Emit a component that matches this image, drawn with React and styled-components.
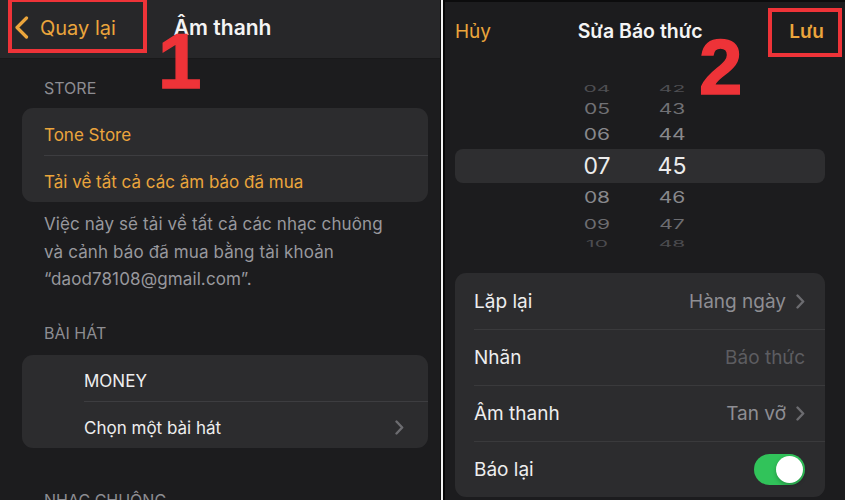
import React from 'react';
import styled, { createGlobalStyle } from 'styled-components';

const Global = createGlobalStyle`
  html, body { margin: 0; padding: 0; background: #1c1c1e; }
  body {
    font-family: Inter, "Noto Sans", "Liberation Sans", sans-serif;
    -webkit-font-smoothing: antialiased;
  }
`;

const ORANGE = '#eba53c';
const RED = '#ee3338';

const Screen = styled.div`
  position: relative;
  width: 845px;
  height: 500px;
  overflow: hidden;
  display: flex;
  background: #1c1c1e;
`;

const LeftPanel = styled.section`
  width: 440px;
  flex: none;
  display: flex;
  flex-direction: column;
  background: #1c1c1e;
`;

const Seam = styled.div`
  width: 2px;
  flex: none;
  background: #f2f2f2;
  border-left: 1px solid #111;
  border-right: 2px solid #050505;
`;

const RightPanel = styled.section`
  flex: 1;
  display: flex;
  flex-direction: column;
  background: #1c1c1e;
  border-top: 2px solid #0c0c0d;
`;

/* ---------- navigation bars ---------- */

const NavBar = styled.header`
  height: 59px;
  flex: none;
  display: flex;
  align-items: center;
  background: #272729;
  border-bottom: 1px solid #19191a;
  padding: 0 0 3px 14px;
  box-sizing: border-box;
  gap: 58px;
`;

const BackButton = styled.div`
  display: flex;
  align-items: center;
  gap: 11px;
  color: ${ORANGE};
  font-size: 20px;
`;

const NavTitle = styled.div`
  color: #f4f4f4;
  font-size: 21px;
  font-weight: 600;
`;

const ModalBar = styled.header`
  height: 58px;
  flex: none;
  display: flex;
  align-items: center;
  justify-content: space-between;
  padding: 0 21px 0 10px;
`;

const BarAction = styled.div`
  color: ${ORANGE};
  font-size: 19px;
  font-weight: ${p => (p.$strong ? 600 : 400)};
`;

const BarTitle = styled.div`
  color: #f4f4f4;
  font-size: 19.5px;
  font-weight: 600;
`;

/* ---------- grouped list (left) ---------- */

const ListBody = styled.div`
  display: flex;
  flex-direction: column;
  padding: 0 12px 0 22px;
`;

const SectionLabel = styled.div`
  color: #8d8d92;
  font-size: 16px;
  line-height: 20px;
  padding-left: 22px;
  margin-top: ${p => p.$top}px;
  margin-bottom: ${p => p.$bottom}px;
  text-transform: uppercase;
`;

const Card = styled.div`
  background: #2c2c2e;
  border-radius: 11px;
  display: flex;
  flex-direction: column;
  overflow: hidden;
`;

const Cell = styled.div`
  height: ${p => p.$h || 47}px;
  display: flex;
  align-items: center;
  margin-left: ${p => p.$indent}px;
  padding: 6px 24px 0 0;
  font-size: 17px;
  color: ${p => p.$color || '#eeeeee'};
  border-top: ${p => (p.$divider ? '1px solid #3d3d40' : 'none')};
  box-sizing: border-box;
`;

const CellText = styled.span`
  flex: 1;
`;

const Footnote = styled.p`
  margin: 9px 0 0;
  padding-left: 22px;
  padding-right: 20px;
  color: #98989d;
  font-size: 17px;
  letter-spacing: 0.12px;
  line-height: 27.5px;
`;

/* ---------- time picker (right) ---------- */

const Picker = styled.div`
  margin: 18px 20px 0 10px;
  display: flex;
  flex-direction: column;
`;

const PickerRow = styled.div`
  height: ${p => p.$h}px;
  display: flex;
  align-items: center;
  padding-left: 117px;
  gap: 25px;
  border-radius: 8px;
  background: ${p => (p.$selected ? '#2e2e30' : 'transparent')};
`;

const Digit = styled.span`
  width: 50px;
  text-align: center;
  font-size: ${p => (p.$selected ? 23 : 21)}px;
  color: ${p => p.$color};
  transform: scaleY(${p => p.$squash});
  display: inline-block;
  line-height: 1;
`;

/* ---------- alarm options (right) ---------- */

const OptionCard = styled.div`
  margin: 23px 20px 0 10px;
  background: #2c2c2e;
  border-radius: 11px;
  display: flex;
  flex-direction: column;
`;

const OptionRow = styled.div`
  height: 56px;
  display: flex;
  align-items: center;
  margin-left: 19px;
  padding-right: 20px;
  gap: 10px;
  border-top: ${p => (p.$divider ? '1px solid #3a3a3c' : 'none')};
  box-sizing: border-box;
  font-size: 19px;
  color: #eeeeee;
`;

const OptionLabel = styled.span`
  flex: 1;
`;

const OptionValue = styled.span`
  color: ${p => (p.$placeholder ? '#5d5d61' : '#8e8e93')};
  font-size: 19px;
`;

const Switch = styled.div`
  width: 51px;
  height: 31px;
  border-radius: 16px;
  background: #31c35a;
  display: flex;
  align-items: center;
  justify-content: flex-end;
  padding: 2px;
  box-sizing: border-box;
`;

const Knob = styled.div`
  width: 27px;
  height: 27px;
  border-radius: 50%;
  background: #fff;
  box-shadow: 0 2px 4px rgba(0, 0, 0, 0.25);
`;

/* ---------- red call-outs drawn over the screens ---------- */

const Callout = styled.div`
  position: absolute;
  left: ${p => p.$x}px;
  top: ${p => p.$y}px;
  width: ${p => p.$w}px;
  height: ${p => p.$h}px;
  border: 4px solid ${RED};
  box-sizing: border-box;
  pointer-events: none;
`;

const StepNumber = styled.div`
  position: absolute;
  left: ${p => p.$x}px;
  top: ${p => p.$y}px;
  color: ${RED};
  font-family: "Liberation Sans", Arial, sans-serif;
  font-weight: 700;
  font-size: 78px;
  line-height: 1;
  -webkit-text-stroke: 1.5px ${RED};
`;

const Chevron = ({ color = '#6c6c70', w = 9, h = 15, sw = 2.4 }) => (
  <svg width={w} height={h} viewBox={`0 0 ${w} ${h}`} fill="none">
    <path
      d={`M1.5 1.5 L${w - 1.8} ${h / 2} L1.5 ${h - 1.5}`}
      stroke={color}
      strokeWidth={sw}
      strokeLinecap="round"
      strokeLinejoin="round"
    />
  </svg>
);

const BackChevron = () => (
  <svg width="15" height="23" viewBox="0 0 15 23" fill="none">
    <path
      d="M12.5 2 L3 11.5 L12.5 21"
      stroke={ORANGE}
      strokeWidth="3.2"
      strokeLinecap="round"
      strokeLinejoin="round"
    />
  </svg>
);

const pickerRows = [
  { h: '04', m: '42', height: 20, squash: 0.42, color: '#4f4f53' },
  { h: '05', m: '43', height: 22, squash: 0.66, color: '#717175' },
  { h: '06', m: '44', height: 29, squash: 0.74, color: '#88888c' },
  { h: '07', m: '45', height: 34, squash: 1, color: '#ececec', selected: true },
  { h: '08', m: '46', height: 29, squash: 0.74, color: '#88888c' },
  { h: '09', m: '47', height: 24, squash: 0.64, color: '#6d6d71' },
  { h: '10', m: '48', height: 14, squash: 0.4, color: '#4c4c50' },
];

export default function App() {
  return (
    <>
      <Global />
      <Screen>
        <LeftPanel>
          <NavBar>
            <BackButton>
              <BackChevron />
              <span>Quay lại</span>
            </BackButton>
            <NavTitle>Âm thanh</NavTitle>
          </NavBar>

          <ListBody>
            <SectionLabel $top={19} $bottom={10}>Store</SectionLabel>
            <Card>
              <Cell $indent={22} $color={ORANGE}>
                <CellText>Tone Store</CellText>
              </Cell>
              <Cell $indent={22} $color={ORANGE} $divider>
                <CellText>Tải về tất cả các âm báo đã mua</CellText>
              </Cell>
            </Card>
            <Footnote>
              Việc này sẽ tải về tất cả các nhạc chuông
              <br />
              và cảnh báo đã mua bằng tài khoản
              <br />
              “daod78108@gmail.com”.
            </Footnote>

            <SectionLabel $top={29} $bottom={12}>Bài hát</SectionLabel>
            <Card>
              <Cell $indent={62} $h={46}>
                <CellText>MONEY</CellText>
              </Cell>
              <Cell $indent={62} $divider>
                <CellText>Chọn một bài hát</CellText>
                <Chevron />
              </Cell>
            </Card>

            <SectionLabel $top={42} $bottom={0}>Nhạc chuông</SectionLabel>
          </ListBody>
        </LeftPanel>

        <Seam />

        <RightPanel>
          <ModalBar>
            <BarAction>Hủy</BarAction>
            <BarTitle>Sửa Báo thức</BarTitle>
            <BarAction $strong>Lưu</BarAction>
          </ModalBar>

          <Picker>
            {pickerRows.map(r => (
              <PickerRow key={r.h} $h={r.height} $selected={r.selected}>
                <Digit $selected={r.selected} $squash={r.squash} $color={r.color}>
                  {r.h}
                </Digit>
                <Digit $selected={r.selected} $squash={r.squash} $color={r.color}>
                  {r.m}
                </Digit>
              </PickerRow>
            ))}
          </Picker>

          <OptionCard>
            <OptionRow>
              <OptionLabel>Lặp lại</OptionLabel>
              <OptionValue>Hàng ngày</OptionValue>
              <Chevron />
            </OptionRow>
            <OptionRow $divider>
              <OptionLabel>Nhãn</OptionLabel>
              <OptionValue $placeholder>Báo thức</OptionValue>
            </OptionRow>
            <OptionRow $divider>
              <OptionLabel>Âm thanh</OptionLabel>
              <OptionValue>Tan vỡ</OptionValue>
              <Chevron />
            </OptionRow>
            <OptionRow $divider>
              <OptionLabel>Báo lại</OptionLabel>
              <Switch>
                <Knob />
              </Switch>
            </OptionRow>
          </OptionCard>
        </RightPanel>

        <Callout $x={8} $y={-2} $w={139} $h={55} />
        <Callout $x={768} $y={8} $w={74} $h={49} />
        <StepNumber $x={158} $y={22}>1</StepNumber>
        <StepNumber $x={699} $y={28}>2</StepNumber>
      </Screen>
    </>
  );
}
